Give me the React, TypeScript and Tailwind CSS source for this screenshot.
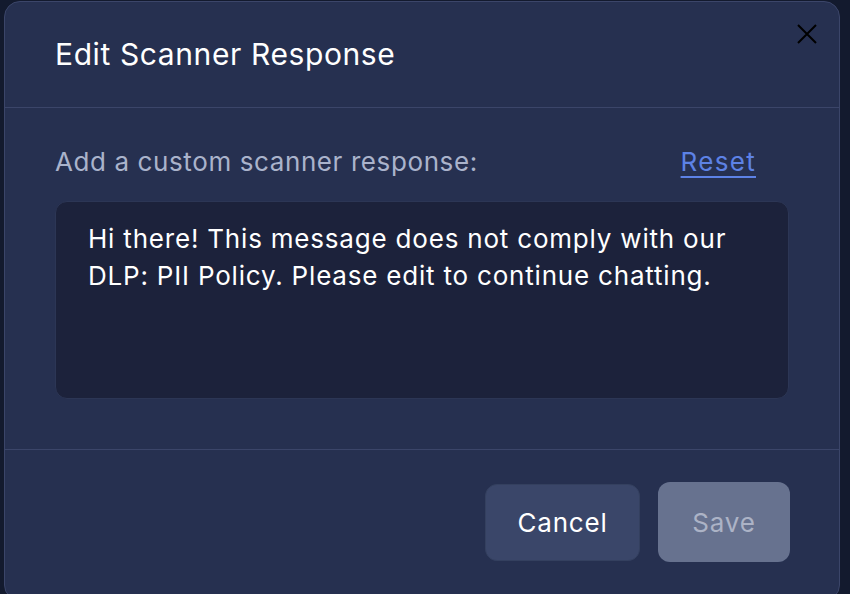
import React from "react";

export default function App() {
  return (
    <div
      className="h-[594px] w-[850px] overflow-hidden bg-[#131a2e] pl-[4px] pt-[1px]"
      style={{ fontFamily: "Inter, 'Noto Sans', sans-serif" }}
    >
      <div className="relative flex h-[600px] w-[836px] flex-col rounded-[16px] border border-[#3b4569] bg-[#263050]">
        <div className="flex h-[106px] items-center border-b border-[#3b4569] px-[50px]">
          <h2 className="text-[30px] font-normal tracking-[0.6px] text-white">Edit Scanner Response</h2>
          <button className="absolute right-[21px] top-[21px] text-black">
            <svg width="22" height="22" viewBox="0 0 22 22" fill="none" stroke="currentColor" strokeWidth="2">
              <path d="M2 2l18 18M20 2L2 20" />
            </svg>
          </button>
        </div>
        <div className="flex flex-col px-[50px] pb-[50px] pt-[36px]">
          <div className="flex h-[34px] items-center justify-between pr-[33px]">
            <span className="text-[26px] tracking-[0.6px] text-[#aab3cb]">Add a custom scanner response:</span>
            <a className="text-[26px] tracking-[1.3px] text-[#5d82e6] underline underline-offset-[5px]">Reset</a>
          </div>
          <div className="mt-[23px] h-[198px] rounded-[12px] border border-[#2c3655] bg-[#1c223b] px-[32px] pt-[18px] text-[26px] leading-[37px] tracking-[0.8px] text-white">
            Hi there! This message does not comply with our
            <br />
            DLP: PII Policy. Please edit to continue chatting.
          </div>
        </div>
        <div className="flex justify-end gap-[18px] border-t border-[#3b4569] pr-[49px] pt-[32px]">
          <button className="mt-[2px] h-[77px] w-[155px] rounded-[12px] border border-[#34405f] bg-[#3a4669] text-[26px] tracking-[0.8px] text-white">
            Cancel
          </button>
          <button className="h-[80px] w-[132px] rounded-[12px] bg-[#67728f] text-[26px] tracking-[0.8px] text-[#acb3c6]">
            Save
          </button>
        </div>
      </div>
    </div>
  );
}
